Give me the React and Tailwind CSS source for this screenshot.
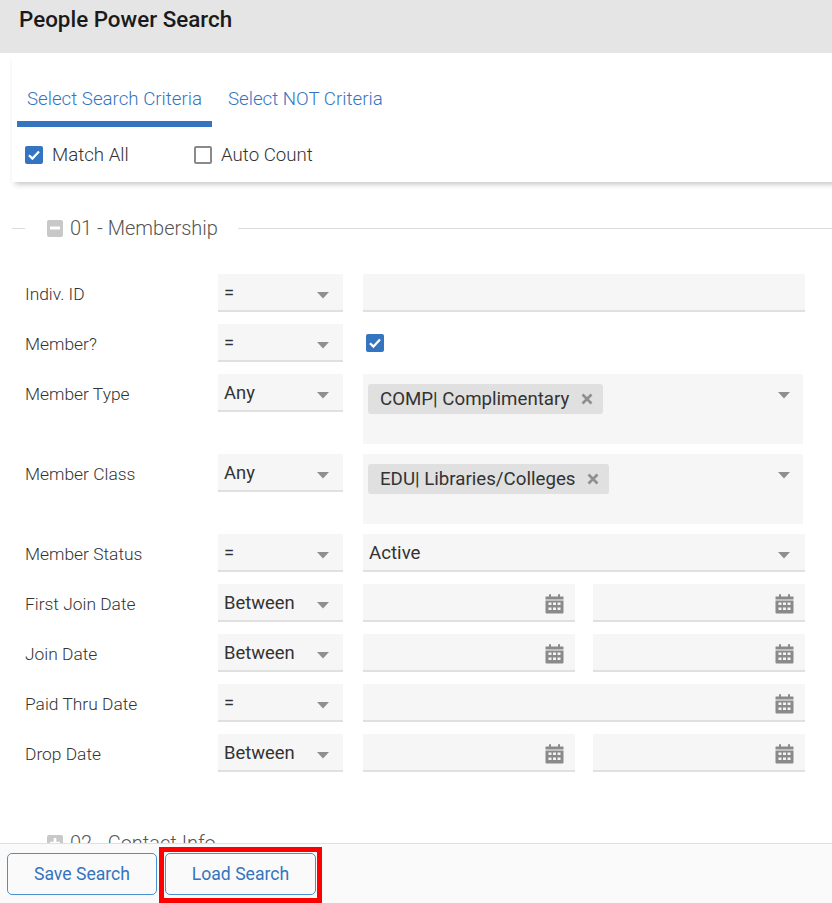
const Caret = ({ className = "" }) => (
  <svg width="14" height="8" viewBox="0 0 14 8" className={className}><path d="M1 1h12L7 7.5z" fill="#8f8f8f" /></svg>
);

const Cal = () => (
  <svg width="19" height="21" viewBox="0 0 19 21" className="shrink-0">
    <path d="M4 1.2h2V4H4zM13 1.2h2V4h-2z" fill="#8a8a8a" />
    <path d="M1 3.5h17a.5.5 0 0 1 .5.5v2.5H.5V4a.5.5 0 0 1 .5-.5z" fill="#8a8a8a" />
    <path d="M.5 7.5h18v12a1 1 0 0 1-1 1h-16a1 1 0 0 1-1-1z" fill="#8a8a8a" />
    <g fill="#f4f4f4">
      <rect x="3.5" y="9.5" width="3" height="2.5" /><rect x="8" y="9.5" width="3" height="2.5" /><rect x="12.5" y="9.5" width="3" height="2.5" />
      <rect x="3.5" y="14.5" width="3" height="2.5" /><rect x="8" y="14.5" width="3" height="2.5" /><rect x="12.5" y="14.5" width="3" height="2.5" />
    </g>
  </svg>
);

const Check = ({ on }) =>
  on ? (
    <span className="flex h-[18px] w-[18px] items-center justify-center rounded-[2px] bg-[#3474c0]">
      <svg width="14" height="12" viewBox="0 0 14 12"><path d="M2 6.2l3.4 3.4L12 2.6" fill="none" stroke="#fff" strokeWidth="2.2" /></svg>
    </span>
  ) : (
    <span className="h-[18px] w-[18px] rounded-[2px] border-2 border-[#8a8a8a] bg-white" />
  );

const Op = ({ v }) => (
  <div className="flex h-[38px] w-[125px] shrink-0 justify-between border-b-2 border-[#e0e0e0] bg-[#f6f6f6] pl-[6px] pr-[13px] pt-[6px] text-[18.4px] text-[#333]">
    <span className="leading-[26px]">{v}</span>
    <Caret className="mt-[11px]" />
  </div>
);

const Field = ({ cal, className = "" }) => (
  <div className={`flex h-[38px] items-center justify-end border-b-2 border-[#e0e0e0] bg-[#f6f6f6] pr-[11px] pt-[2px] ${className}`}>
    {cal && <Cal />}
  </div>
);

const Row = ({ label, op, tall, children }) => (
  <div className={`flex items-start ${tall ? "mb-[10px] h-[70px]" : "mb-[12px] h-[38px]"}`}>
    <div className="w-[206px] shrink-0 pl-[13px] pt-[8px] text-[17.4px] font-light leading-[24px] text-[#333]">{label}</div>
    <Op v={op} />
    <div className="ml-[20px] flex w-[442px] gap-[18px]">{children}</div>
  </div>
);

const Multi = ({ text }) => (
  <div className="flex h-[70px] w-[440px] items-start justify-between bg-[#f6f6f6] pl-[5px] pr-[12px] pt-[10px]">
    <span className="flex h-[30px] items-center gap-[12px] rounded-[3px] bg-[#e0e0e0] pl-[12px] pr-[10px] text-[18.7px] leading-[30px] text-[#333]">
      {text}
      <svg width="12" height="12" viewBox="0 0 12 12"><path d="M1.5 1.5l9 9M10.5 1.5l-9 9" stroke="#8f8f8f" strokeWidth="2.6" /></svg>
    </span>
    <Caret className="mt-[7px]" />
  </div>
);

const Legend = ({ icon, text, className = "" }) => (
  <div className={`flex items-center ${className}`}>
    <div className="h-px w-[13px] bg-[#dcdcdc]" />
    <div className="ml-[22px] flex h-[17px] w-[16px] items-center justify-center rounded-[2px] bg-[#c8c8c8]">
      <svg width="10" height="10" viewBox="0 0 10 10"><path d={icon === "minus" ? "M0 3.5h10v3H0z" : "M0 3.7h3.7V0h2.6v3.7H10v2.6H6.3V10H3.7V6.3H0z"} fill="#fff" /></svg>
    </div>
    <span className="ml-[7px] text-[20px] font-light leading-[24px] text-[#555]">{text}</span>
    <div className="ml-[20px] h-px flex-1 bg-[#dcdcdc]" />
  </div>
);

export default function App() {
  return (
    <div className="relative h-[903px] w-[832px] overflow-hidden bg-white font-['Roboto',sans-serif]">
      <header className="h-[53px] bg-[#e5e5e5] pl-[19px] pt-[5px] text-[22.4px] font-medium leading-[28px] text-[#1a1a1a]">People Power Search</header>

      <div className="ml-[12px] mr-[-20px] h-[129px] bg-white shadow-[0_5px_6px_-3px_rgba(0,0,0,0.25)]">
        <div className="flex h-[74px] items-start pl-[5px] pt-[21px] text-[18.7px] font-light text-[#3474c0]">
          <div className="h-[53px] w-[195px] border-b-[6px] border-[#3474c0] pt-px text-center leading-[48px]">Select Search Criteria</div>
          <div className="ml-[16px] pt-px leading-[48px]">Select NOT Criteria</div>
        </div>
        <div className="flex items-center pl-[13px] pt-[16px] text-[18.7px] font-light leading-[24px] text-[#333]">
          <Check on />
          <span className="ml-[9px] w-[142px]">Match All</span>
          <Check />
          <span className="ml-[9px]">Auto Count</span>
        </div>
      </div>

      <Legend icon="minus" text="01 - Membership" className="ml-[12px] mt-[34px]" />

      <div className="ml-[12px] mt-[34px] flex flex-col">
        <Row label="Indiv. ID" op="="><Field className="w-[442px]" /></Row>
        <Row label="Member?" op="=">
          <div className="ml-[3px] mt-[10px]"><Check on /></div>
        </Row>
        <Row label="Member Type" op="Any" tall><Multi text="COMP| Complimentary" /></Row>
        <Row label="Member Class" op="Any" tall><Multi text="EDU| Libraries/Colleges" /></Row>
        <Row label="Member Status" op="=">
          <div className="flex h-[38px] w-[442px] justify-between border-b-2 border-[#e0e0e0] bg-[#f6f6f6] pl-[6px] pr-[14px] pt-[6px] text-[18.7px] leading-[26px] text-[#333]">
            Active
            <Caret className="mt-[11px]" />
          </div>
        </Row>
        <Row label="First Join Date" op="Between"><Field cal className="w-[212px]" /><Field cal className="w-[212px]" /></Row>
        <Row label="Join Date" op="Between"><Field cal className="w-[212px]" /><Field cal className="w-[212px]" /></Row>
        <Row label="Paid Thru Date" op="="><Field cal className="w-[442px]" /></Row>
        <Row label="Drop Date" op="Between"><Field cal className="w-[212px]" /><Field cal className="w-[212px]" /></Row>
      </div>

      <Legend icon="plus" text="02 - Contact Info" className="ml-[12px] mt-[47px]" />

      <footer className="absolute bottom-0 left-0 flex h-[60px] w-full gap-[8px] border-t border-[#e0e0e0] bg-[#fafafa] pl-[7px] pt-[9px]">
        <button className="h-[42px] w-[150px] rounded-[5px] border border-[#4a8fd0] bg-transparent text-[17.6px] text-[#3474c0]">Save Search</button>
        <button className="h-[42px] w-[151px] rounded-[5px] border border-[#4a8fd0] bg-transparent text-[17.6px] text-[#3474c0]">Load Search</button>
      </footer>
      <div className="absolute bottom-0 left-[159px] h-[56px] w-[163px] border-[5px] border-[#ff0000]" />
    </div>
  );
}
